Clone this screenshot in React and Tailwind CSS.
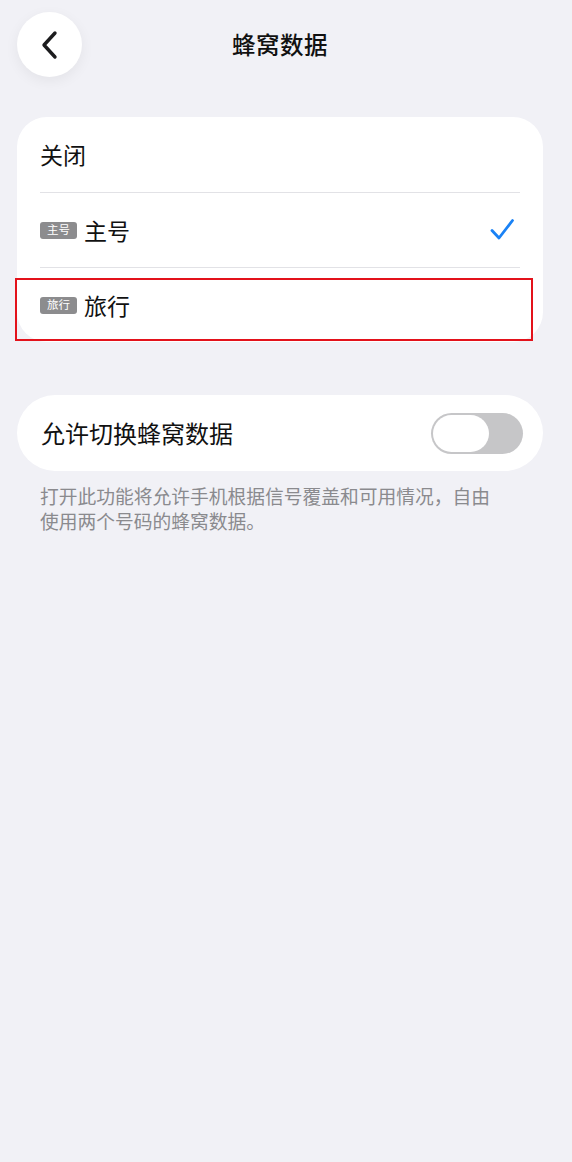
import React from 'react';

const font = "font-['Noto_Sans_CJK_SC','Noto_Sans',sans-serif]";

const Badge = ({ label }) => (
  <span className="mr-[7px] inline-flex h-[17px] w-[37px] items-center justify-center rounded-[3px] bg-[#8c8c8e] text-[11.5px] leading-none text-white">
    {label}
  </span>
);

const Row = ({ children, height, divider, check }) => (
  <div className={`flex items-center ${height} ${divider ? 'border-b border-[#e2e2e6]' : ''}`}>
    <div className="flex flex-1 items-center text-[23px] text-[#111]">{children}</div>
    {check && (
      <svg width="24" height="24" viewBox="0 0 24 24" className="mr-[6px]">
        <path d="M2 12.5 L9 20 L22.5 2.5" fill="none" stroke="#1a82f5" strokeWidth="2.8" strokeLinecap="round" strokeLinejoin="round" />
      </svg>
    )}
  </div>
);

export default function App() {
  return (
    <div className={`min-h-[1162px] bg-[#f1f1f6] pr-[29px] pl-[17px] ${font}`}>
      {/* header */}
      <div className="grid grid-cols-[1fr_auto_1fr] items-center pt-[12px]">
        <div>
          <button className="flex h-[65px] w-[65px] items-center justify-center rounded-full bg-white shadow-[0_4px_14px_rgba(0,0,0,0.06)]">
            <svg width="20" height="30" viewBox="0 0 20 30">
              <path d="M15 3 L4 15 L15 27" fill="none" stroke="#1c1c1e" strokeWidth="3.4" strokeLinecap="round" strokeLinejoin="round" />
            </svg>
          </button>
        </div>
        <h1 className="text-[23.5px] font-medium tracking-[0.5px] text-[#111]">蜂窝数据</h1>
        <div />
      </div>

      {/* SIM list */}
      <div className="relative mt-[40px] rounded-[30px] bg-white px-[23px]">
        <Row height="h-[76px]" divider>关闭</Row>
        <Row height="h-[75px]" divider check>
          <Badge label="主号" />
          主号
        </Row>
        <Row height="h-[74px]">
          <Badge label="旅行" />
          旅行
        </Row>
        <div className="pointer-events-none absolute left-[-2px] right-[10px] top-[161px] h-[63px] border-2 border-[#e3121b]" />
      </div>

      {/* switch */}
      <div className="mt-[53px] flex h-[76px] items-center justify-between rounded-full bg-white pl-[24px] pr-[20px]">
        <span className="text-[24px] text-[#111]">允许切换蜂窝数据</span>
        <div className="flex h-[41px] w-[92px] items-center rounded-full bg-[#c6c6c8] p-[2px]">
          <div className="h-[37px] w-[56px] rounded-full bg-white" />
        </div>
      </div>

      <p className="mt-[12px] px-[23px] text-[18.75px] leading-[25px] text-[#8a8a8e]">
        打开此功能将允许手机根据信号覆盖和可用情况，自由
        <br />
        使用两个号码的蜂窝数据。
      </p>
    </div>
  );
}
